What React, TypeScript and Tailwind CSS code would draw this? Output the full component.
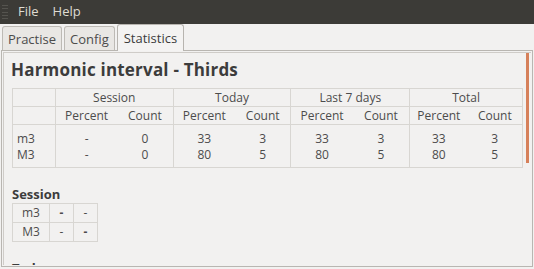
import React from "react";

const groups = ["Session", "Today", "Last 7 days", "Total"];

const rows = [
  { name: "m3", session: ["-", "0"], today: ["33", "3"], week: ["33", "3"], total: ["33", "3"] },
  { name: "M3", session: ["-", "0"], today: ["80", "5"], week: ["80", "5"], total: ["80", "5"] },
];

function Grip() {
  return (
    <div className="flex h-[14px] w-[6px] flex-col justify-between ml-[2px]">
      {[0, 1, 2, 3, 4].map((i) => (
        <div key={i} className="h-px w-[6px] bg-[#55544f]" />
      ))}
    </div>
  );
}

function Tab({ label, active }: { label: string; active?: boolean }) {
  if (active) {
    return (
      <div className="relative -mb-px flex h-[27px] items-center rounded-t-[3px] border border-b-0 border-[#b7b4af] bg-[#f4f3f2] px-[6px] pt-px text-[13px] text-[#3c3c3c]">
        {label}
      </div>
    );
  }
  return (
    <div className="flex h-[24px] items-center rounded-t-[3px] border border-b-0 border-[#bdbab5] bg-[#e9e7e4] px-[5px] pt-[2px] text-[13px] text-[#4c4c4c]">
      {label}
    </div>
  );
}

export default function App() {
  const cell = "h-[16px] p-0 text-center leading-[16px]";
  return (
    <div className="flex h-[269px] w-[534px] flex-col overflow-hidden bg-[#f2f1f0] font-['Open_Sans',sans-serif] text-[#4c4c4c]">
      <div className="flex h-[24px] shrink-0 items-center bg-[#3c3b37] text-[13px] text-[#dfdbd2]">
        <Grip />
        <span className="ml-[10px]">File</span>
        <span className="ml-[14px]">Help</span>
      </div>

      <div className="flex h-[26px] shrink-0 items-end gap-[2px] pl-[2px]">
        <Tab label="Practise" />
        <Tab label="Config" />
        <Tab label="Statistics" active />
      </div>

      <div className="mx-[1px] flex min-h-0 flex-1 border border-[#b9b6b1] p-px">
        <div className="flex min-h-0 flex-1 border-t border-l border-[#cfccc8]">
          <div className="min-w-0 flex-1 overflow-hidden pl-[7px] pt-[6px]">
            <h1 className="text-[17px] font-bold leading-[22px] tracking-[0.2px] text-[#3c3c3c]">
              Harmonic interval - Thirds
            </h1>

            <table className="mt-[7px] w-[511px] ml-px border-collapse border border-[#d8d6d2] text-[12px]">
              <colgroup>
                <col className="w-[43px]" />
                <col className="w-[62px]" />
                <col className="w-[56px]" />
                <col className="w-[62px]" />
                <col className="w-[56px]" />
                <col className="w-[62px]" />
                <col className="w-[57px]" />
                <col className="w-[58px]" />
                <col className="w-[55px]" />
              </colgroup>
              <tbody>
                <tr className="h-[18px] border-b border-[#d8d6d2]">
                  <td className="border-r border-[#d8d6d2]" />
                  {groups.map((g) => (
                    <td key={g} colSpan={2} className="border-r border-[#d8d6d2] p-0 text-center leading-[17px]">
                      {g}
                    </td>
                  ))}
                </tr>
                <tr className="h-[18px] border-b border-[#d8d6d2]">
                  <td className="border-r border-[#d8d6d2]" />
                  {groups.map((g) => (
                    <React.Fragment key={g}>
                      <td className="p-0 text-center leading-[17px]">Percent</td>
                      <td className="border-r border-[#d8d6d2] p-0 text-center leading-[17px]">Count</td>
                    </React.Fragment>
                  ))}
                </tr>
                {rows.map((r, i) => {
                  const pad = i === 0 ? "pt-[6px]" : "pb-[4px]";
                  const vals = [r.session, r.today, r.week, r.total];
                  return (
                    <tr key={r.name}>
                      <td className={`${cell} ${pad} border-r border-[#d8d6d2] pl-[4px] text-left`}>{r.name}</td>
                      {vals.map((v, j) => (
                        <React.Fragment key={j}>
                          <td className={`${cell} ${pad}`}>{v[0]}</td>
                          <td className={`${cell} ${pad} border-r border-[#d8d6d2]`}>{v[1]}</td>
                        </React.Fragment>
                      ))}
                    </tr>
                  );
                })}
              </tbody>
            </table>

            <h2 className="mt-[17px] ml-px text-[13px] font-bold leading-[18px] text-[#3c3c3c]">Session</h2>
            <table className="ml-px border-collapse border border-[#d8d6d2] text-[12px]">
              <tbody>
                <tr className="h-[18px] border-b border-[#d8d6d2]">
                  <td className="w-[37px] border-r border-[#d8d6d2] p-0 text-center">m3</td>
                  <td className="w-[24px] border-r border-[#d8d6d2] p-0 text-center font-bold">-</td>
                  <td className="w-[24px] p-0 text-center">-</td>
                </tr>
                <tr className="h-[19px]">
                  <td className="border-r border-[#d8d6d2] p-0 text-center">M3</td>
                  <td className="border-r border-[#d8d6d2] p-0 text-center">-</td>
                  <td className="p-0 text-center font-bold">-</td>
                </tr>
              </tbody>
            </table>

            <h2 className="mt-[17px] ml-px text-[13px] font-bold leading-[18px] text-[#3c3c3c]">Today</h2>
          </div>
          <div className="flex w-[5px] shrink-0 flex-col">
            <div className="h-[110px] w-[3px] bg-[#d6805a]" />
          </div>
        </div>
      </div>
      <div className="h-[2px] shrink-0" />
    </div>
  );
}
